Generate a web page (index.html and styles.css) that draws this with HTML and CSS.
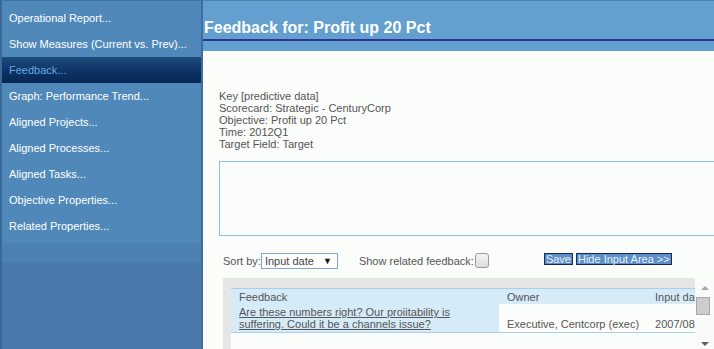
FILE: index.html
```html
<!DOCTYPE html>
<html lang="en">
<head>
    <meta charset="UTF-8">
    <title>Feedback</title>
    <link rel="stylesheet" href="styles.css">
</head>
<body>

<div class="app">
    <!-- menu de la izquierda -->
    <nav class="menu">
        <ul class="menu-list">
            <li>Operational Report...</li>
            <li>Show Measures (Current vs. Prev)...</li>
            <li class="active">Feedback...</li>
            <li>Graph: Performance Trend...</li>
            <li>Aligned Projects...</li>
            <li>Aligned Processes...</li>
            <li>Aligned Tasks...</li>
            <li>Objective Properties...</li>
            <li>Related Properties...</li>
        </ul>
        <div class="menu-fade"></div>
    </nav>

    <main class="panel">
        <header class="panel-head">
            <h1>Feedback for: Profit up 20 Pct</h1>
        </header>

        <div class="panel-body">
            <div class="info">
                Key [predictive data]<br>
                Scorecard: Strategic - CenturyCorp<br>
                Objective: Profit up 20 Pct<br>
                Time: 2012Q1<br>
                Target Field: Target
            </div>

            <div class="input-area"></div>

            <div class="toolbar">
                <span class="label">Sort by:</span>
                <span class="select">Input date <span class="caret">&#9660;</span></span>
                <span class="label related">Show related feedback:</span>
                <span class="check"></span>
                <button class="btn save">Save</button>
                <button class="btn">Hide Input Area &gt;&gt;</button>
            </div>

            <div class="grid-box">
                <div class="grid-scroll">
                    <table class="grid">
                        <tr>
                            <th class="col-text">Feedback</th>
                            <th class="col-owner">Owner</th>
                            <th class="col-date">Input date</th>
                        </tr>
                        <tr>
                            <td class="col-text"><a href="#">Are these numbers right? Our proiitability is suffering. Could it be a channels issue?</a></td>
                            <td class="col-owner">Executive, Centcorp (exec)</td>
                            <td class="col-date">2007/08/14</td>
                        </tr>
                    </table>
                </div>
                <div class="vscroll">
                    <div class="arrow up"></div>
                    <div class="thumb"></div>
                    <div class="arrow down"></div>
                </div>
            </div>
        </div>
    </main>
</div>

</body>
</html>
```

FILE: styles.css
```css
html, body {
    margin: 0;
    padding: 0;
    height: 100%;
    overflow: hidden;
}

body {
    font-family: "Liberation Sans", Arial, sans-serif;
    font-size: 11px;
    background-color: #fbfdfb;
}

.app {
    display: flex;
    height: 349px;
}

/* menu */
.menu {
    width: 199px;
    flex: none;
    display: flex;
    flex-direction: column;
    background-color: #4a79ae;
    border-left: 2px solid #3a6898;
    border-right: 2px solid #3b6ea3;
    border-top: 1px solid #3f72a6;
}

.menu-list {
    list-style: none;
    margin: 0;
    padding: 4px 0 4px;
    background-color: #5089b9;
}

.menu-list li {
    height: 26px;
    line-height: 26px;
    padding-left: 7px;
    color: #ffffff;
    white-space: nowrap;
}

.menu-list li.active {
    background: linear-gradient(#1d4c7e, #0d3363 55%, #062655);
    color: #68a6e4;
}

.menu-fade {
    height: 19px;
    background: repeating-conic-gradient(#5089b9 0 25%, #4878ad 0 50%) 0 0 / 2px 2px;
}

/* panel derecho */
.panel {
    flex: 1;
    overflow: hidden;
    color: #555555;
}

.panel-head {
    background-color: #64a0cf;
    border-top: 1px solid #4b82b8;
    padding-bottom: 10px;
}

.panel-head h1 {
    margin: 0;
    padding: 18px 0 2px 1px;
    font-size: 16px;
    line-height: 18px;
    color: #ffffff;
    border-bottom: 2px solid #2d3590;
    white-space: nowrap;
}

.panel-body {
    padding: 39px 0 0 16px;
}

.info {
    line-height: 12px;
    white-space: nowrap;
}

.input-area {
    width: 540px;
    height: 73px;
    margin-top: 11px;
    border: 1px solid #8fc1dd;
    background-color: #fbfdfb;
}

.toolbar {
    display: flex;
    align-items: flex-start;
    margin-top: 17px;
    padding-left: 4px;
    height: 16px;
    white-space: nowrap;
}

.label {
    line-height: 16px;
}

.select {
    width: 72px;
    height: 14px;
    line-height: 14px;
    margin-left: 0;
    padding-left: 3px;
    border: 1px solid #7ea8ce;
    background-color: #ffffff;
    color: #444444;
    position: relative;
}

.caret {
    position: absolute;
    right: 5px;
    top: 0;
    font-size: 9px;
    color: #111111;
}

.related {
    margin-left: 21px;
}

.check {
    width: 12px;
    height: 13px;
    margin-left: 1px;
    border: 1px solid #9a9a9a;
    border-radius: 3px;
    background: linear-gradient(#f4f4f4, #dcdcdc);
}

.btn {
    font-family: "Liberation Sans", Arial, sans-serif;
    font-size: 11px;
    line-height: 10px;
    height: 12px;
    padding: 0 1px;
    margin-left: 3px;
    background-color: #5e8ec8;
    color: #e6f2ff;
    border: 1px solid #1c2856;
    border-radius: 0;
}

.btn.save {
    margin-left: 55px;
}

/* tabla */
.grid-box {
    display: flex;
    margin: 9px 0 0 4px;
    height: 80px;
    background-color: #e6e6e6;
}

.grid-scroll {
    flex: 1;
    overflow: hidden;
    margin: 10px 0 0 8px;
    background-color: #fbfdfb;
}

.grid {
    border-collapse: collapse;
    width: 520px;
    color: #555555;
}

.grid th {
    height: 15px;
    padding: 0 8px;
    text-align: left;
    font-weight: normal;
    background-color: #d6ebf8;
    border-top: 1px solid #a9cfe9;
    white-space: nowrap;
}

.grid td {
    line-height: 12px;
    padding: 2px 8px 2px;
    vertical-align: bottom;
    border-bottom: 1px solid #a9cfe9;
    background-color: #fbfdfb;
    white-space: nowrap;
}

.grid td.col-text {
    background-color: #d6ebf8;
    white-space: normal;
}

.grid a {
    color: #555555;
}

.col-text {
    width: 252px;
}

.col-owner {
    width: 132px;
}

.vscroll {
    width: 19px;
    flex: none;
    background-color: #fafafa;
    display: flex;
    flex-direction: column;
    align-items: center;
}

.arrow {
    width: 0;
    height: 0;
    border-left: 4px solid transparent;
    border-right: 4px solid transparent;
}

.arrow.up {
    margin-top: 8px;
    border-bottom: 4px solid #a8a8a8;
}

.arrow.down {
    margin-top: 27px;
    border-top: 4px solid #606060;
}

.thumb {
    width: 12px;
    height: 16px;
    margin-top: 7px;
    margin-right: 3px;
    background-color: #cdcdcd;
    border: 1px solid #a9a9a9;
}
```
